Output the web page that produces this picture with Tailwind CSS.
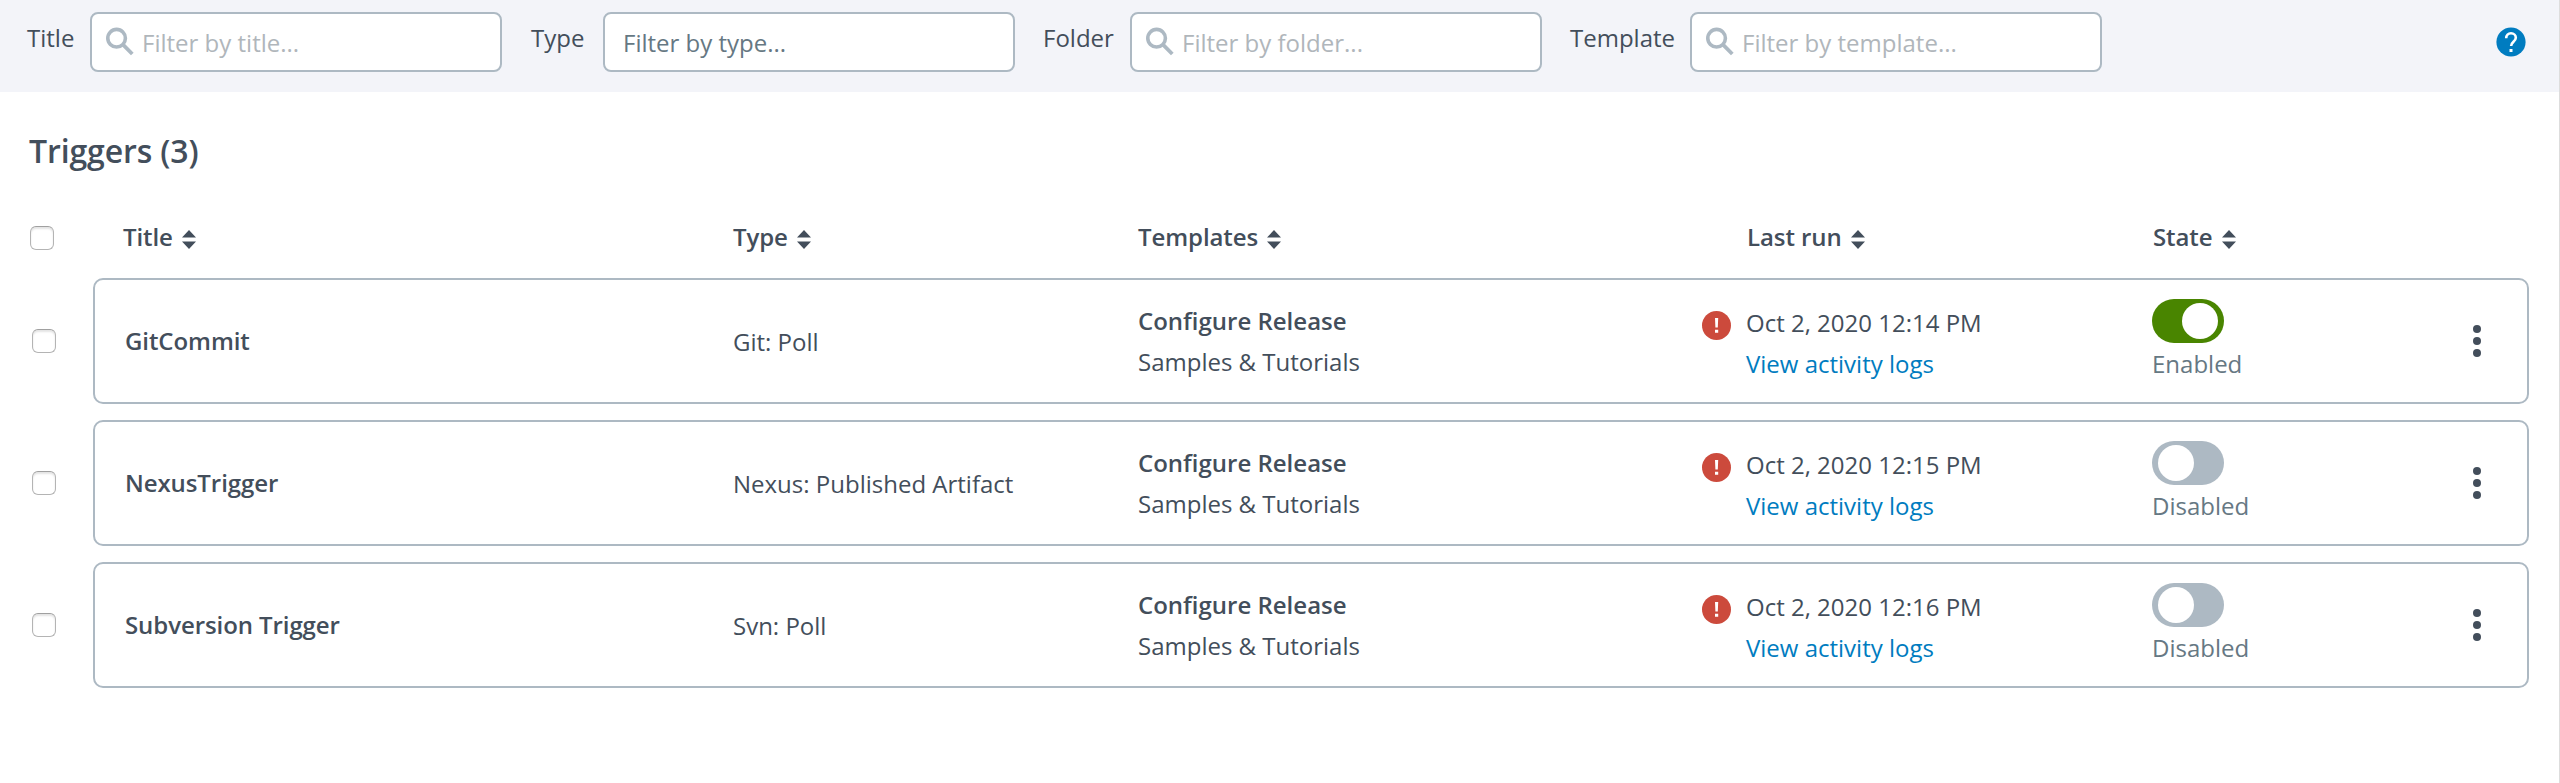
<!DOCTYPE html>
<html lang="en">
<head>
<meta charset="utf-8">
<title>Triggers</title>
<script src="https://cdn.jsdelivr.net/npm/@tailwindcss/browser@4"></script>
</head>
<body class="bg-white">
<svg class="hidden">
  <symbol id="search" viewBox="0 0 28 34"><circle cx="10.6" cy="11.2" r="8.8" fill="none" stroke="currentColor" stroke-width="3.6"/><path d="M17 17.7 26.3 27" fill="none" stroke="currentColor" stroke-width="3.8"/></symbol>
  <symbol id="sort" viewBox="0 0 14 19"><path d="M7 0 14 7.5H0zM7 19 0 11.5H14z" fill="currentColor"/></symbol>
  <symbol id="dots" viewBox="0 0 8 32"><circle cx="4" cy="4" r="4"/><circle cx="4" cy="16" r="4"/><circle cx="4" cy="28" r="4"/></symbol>
  <symbol id="alert" viewBox="0 0 29 29"><circle cx="14.5" cy="14.5" r="14.5" fill="#cc4a3c"/><path d="M13 7h3.2l-.4 9.4h-2.4zM13 18.7h3.2v3H13z" fill="#fff"/></symbol>
</svg>
<div class="w-[2560px] h-[783px] border-r border-[#dddddd] font-['Open_Sans',sans-serif] text-2xl leading-8 text-[#434e5b] overflow-hidden">
  <header class="h-[92px] bg-[#f3f4f9] pt-3 pl-[27px] flex items-start">
    <label class="w-[63px] pt-[10px]">Title</label>
    <div class="w-[412px] h-[60px] bg-white border-2 border-[#adb9c3] rounded-lg flex pl-[14px] pt-[13px]"><svg class="w-7 h-[34px] text-[#adb9c3]"><use href="#search"/></svg><span class="pl-[8px] text-[#b0b6bb]">Filter by title...</span></div>
    <label class="w-[72px] ml-[29px] pt-[10px]">Type</label>
    <div class="w-[412px] h-[60px] bg-white border-2 border-[#adb9c3] rounded-lg flex pl-[18px] pt-[13px] text-[#667883]">Filter by type...</div>
    <label class="w-[87px] ml-[28px] pt-[10px]">Folder</label>
    <div class="w-[412px] h-[60px] bg-white border-2 border-[#adb9c3] rounded-lg flex pl-[14px] pt-[13px]"><svg class="w-7 h-[34px] text-[#adb9c3]"><use href="#search"/></svg><span class="pl-[8px] text-[#b0b6bb]">Filter by folder...</span></div>
    <label class="w-[120px] ml-[28px] pt-[10px]">Template</label>
    <div class="w-[412px] h-[60px] bg-white border-2 border-[#adb9c3] rounded-lg flex pl-[14px] pt-[13px]"><svg class="w-7 h-[34px] text-[#adb9c3]"><use href="#search"/></svg><span class="pl-[8px] text-[#b0b6bb]">Filter by template...</span></div>
    <svg class="w-[30px] h-[30px] ml-auto mr-[33px] mt-[15px]" viewBox="0 0 30 30"><circle cx="15" cy="15" r="14.6" fill="#007cc0"/><path d="M10.2 11.3c0-3 2-5 4.8-5s4.8 2 4.8 4.5c0 3.8-4.7 4.2-4.7 8.2" fill="none" stroke="#fff" stroke-width="2.6"/><path d="M13.5 22h3v3h-3z" fill="#fff"/></svg>
  </header>
  <main class="pl-[29px] pr-[30px]">
    <h1 class="mt-[37px] text-[32px] leading-[44px] font-semibold tracking-[-0.12px]">Triggers (3)</h1>
    <div class="mt-[48px] h-8 mb-[25px] flex items-start font-semibold tracking-[-0.08px]">
      <span class="w-6 h-6 ml-px mt-[5px] rounded-md border border-[#b4b4b4] border-t-[#a0a0a0] shadow-[inset_0_2px_2px_#e4e4e4]"></span>
      <div class="w-[610px] ml-[69px] flex gap-[9px]">Title<svg class="w-[14px] h-[19px] mt-[9px]"><use href="#sort"/></svg></div>
      <div class="w-[405px] flex gap-[9px]">Type<svg class="w-[14px] h-[19px] mt-[9px]"><use href="#sort"/></svg></div>
      <div class="w-[609px] flex gap-[9px]">Templates<svg class="w-[14px] h-[19px] mt-[9px]"><use href="#sort"/></svg></div>
      <div class="w-[406px] flex gap-[9px]">Last run<svg class="w-[14px] h-[19px] mt-[9px]"><use href="#sort"/></svg></div>
      <div class="flex gap-[9px]">State<svg class="w-[14px] h-[19px] mt-[9px]"><use href="#sort"/></svg></div>
    </div>
    <div id="rows" class="flex flex-col gap-4"></div>
  </main>
</div>
<script>
const rows = [
  ['GitCommit', 'Git: Poll', '12:14', true],
  ['NexusTrigger', 'Nexus: Published Artifact', '12:15', false],
  ['Subversion Trigger', 'Svn: Poll', '12:16', false],
];
document.getElementById('rows').innerHTML = rows.map(([title, type, time, on]) => `
  <div class="flex items-center">
    <span class="w-6 h-6 ml-[3px] mr-[37px] rounded-md border border-[#b4b4b4] border-t-[#a0a0a0] shadow-[inset_0_2px_2px_#e4e4e4]"></span>
    <div class="flex-1 h-[126px] border-2 border-[#adb9c3] rounded-[10px] flex items-start pl-[30px]">
      <div class="w-[608px] pt-[45px] font-semibold tracking-[-0.08px]">${title}</div>
      <div class="w-[405px] pt-[46px]">${type}</div>
      <div class="w-[564px] pt-[20px] leading-[41px]"><div class="font-semibold">Configure Release</div><div>Samples &amp; Tutorials</div></div>
      <svg class="w-[29px] h-[29px] mt-[31px]"><use href="#alert"/></svg>
      <div class="w-[421px] pl-[15px] pt-[22px] leading-[41px]"><div>Oct 2, 2020 ${time} PM</div><div class="text-[#007cc0]">View activity logs</div></div>
      <div class="pt-[19px] text-[#667883]">
        <div class="w-[72px] h-11 rounded-full px-[6px] flex items-center ${on ? 'bg-[#498500] justify-end' : 'bg-[#adb9c3]'}"><span class="w-9 h-9 rounded-full bg-white"></span></div>
        <div class="mt-[5px]">${on ? 'Enabled' : 'Disabled'}</div>
      </div>
      <svg class="w-2 h-8 ml-auto mr-[46px] mt-[45px]"><use href="#dots" fill="#434e5b"/></svg>
    </div>
  </div>`).join('');
</script>
</body>
</html>
